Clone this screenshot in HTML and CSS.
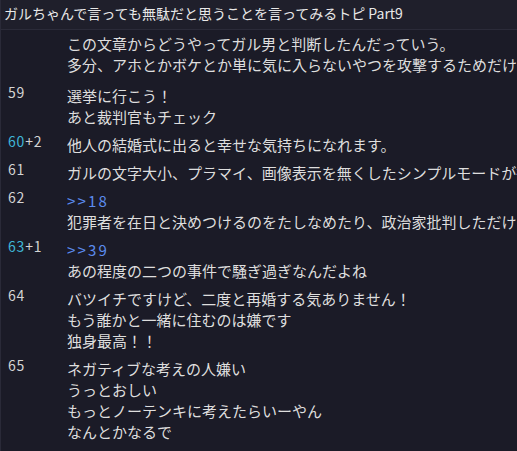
FILE: index.html
```html
<!DOCTYPE html>
<html lang="ja">

<head>
    <meta charset="UTF-8">
    <meta name="viewport" content="width=device-width, initial-scale=1.0">
    <title>ガルちゃんで言っても無駄だと思うことを言ってみるトピ Part9</title>
    <link rel="stylesheet" href="styles.css">
</head>

<body>
    <div class="topic">
        <div class="topic-title">ガルちゃんで言っても無駄だと思うことを言ってみるトピ Part9</div>

        <div class="comment-list">
            <div class="comment first">
                <div class="num"></div>
                <div class="body">
                    <p>この文章からどうやってガル男と判断したんだっていう。</p>
                    <p>多分、アホとかボケとか単に気に入らないやつを攻撃するためだけに使ってるんじゃないの</p>
                </div>
            </div>
            <div class="comment">
                <div class="num">59</div>
                <div class="body">
                    <p>選挙に行こう！</p>
                    <p>あと裁判官もチェック</p>
                </div>
            </div>
            <div class="comment">
                <div class="num"><span class="hot">60</span>+2</div>
                <div class="body">
                    <p>他人の結婚式に出ると幸せな気持ちになれます。</p>
                </div>
            </div>
            <div class="comment">
                <div class="num">61</div>
                <div class="body">
                    <p>ガルの文字大小、プラマイ、画像表示を無くしたシンプルモードが欲しい</p>
                </div>
            </div>
            <div class="comment">
                <div class="num">62</div>
                <div class="body">
                    <p><a class="anchor" href="#">&gt;&gt;18</a></p>
                    <p>犯罪者を在日と決めつけるのをたしなめたり、政治家批判しただけでガル男認定される</p>
                </div>
            </div>
            <div class="comment">
                <div class="num"><span class="hot">63</span>+1</div>
                <div class="body">
                    <p><a class="anchor" href="#">&gt;&gt;39</a></p>
                    <p>あの程度の二つの事件で騒ぎ過ぎなんだよね</p>
                </div>
            </div>
            <div class="comment">
                <div class="num">64</div>
                <div class="body">
                    <p>バツイチですけど、二度と再婚する気ありません！</p>
                    <p>もう誰かと一緒に住むのは嫌です</p>
                    <p>独身最高！！</p>
                </div>
            </div>
            <div class="comment">
                <div class="num">65</div>
                <div class="body">
                    <p>ネガティブな考えの人嫌い</p>
                    <p>うっとおしい</p>
                    <p>もっとノーテンキに考えたらいーやん</p>
                    <p>なんとかなるで</p>
                </div>
            </div>
        </div>
    </div>
</body>

</html>
```

FILE: styles.css
```css
body {
    margin: 0;
    padding: 0;
    background-color: #1b1b27;
    color: #dedede;
    font-family: "Noto Sans CJK JP", "Noto Sans", sans-serif;
    overflow: hidden;
}

.topic {
    height: 451px;
    overflow: hidden;
    border-left: 1px solid #2a2a38;
}

.topic-title {
    height: 29px;
    line-height: 26px;
    padding-left: 3px;
    font-size: 14px;
    color: #e8e8e8;
    background-color: #1f1f2b;
    border-bottom: 1px solid #2b2b39;
    white-space: nowrap;
}

.comment-list {
    margin-top: -1px;
}

.comment {
    display: grid;
    grid-template-columns: 66px 1fr;
    padding: 3.5px 0;
}

.comment.first {
    padding-bottom: 6.5px;
}

.comment .num {
    padding-left: 7px;
    font-size: 14px;
    line-height: 14px;
    letter-spacing: 0.8px;
    color: #d4d4d4;
}

.comment .num .hot {
    color: #3fb6d8;
}

.comment .body {
    min-width: 0;
    overflow: hidden;
}

.comment .body p {
    margin: 0;
    font-size: 15px;
    line-height: 21px;
    white-space: nowrap;
}

.anchor {
    display: inline-block;
    line-height: 21px;
    color: #5b8cef;
    text-decoration: none;
    letter-spacing: 2.2px;
}
```
